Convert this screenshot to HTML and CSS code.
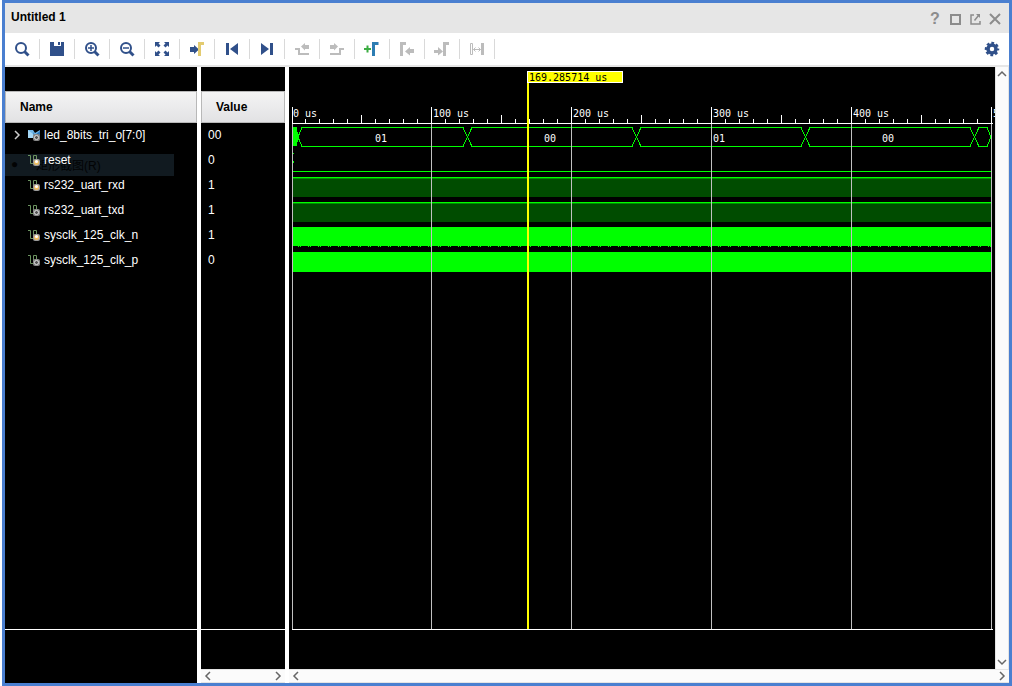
FILE: index.html
```html
<!DOCTYPE html>
<html lang="en">
<head>
<meta charset="utf-8">
<title>Untitled 1</title>
<link rel="stylesheet" href="styles.css">
</head>
<body>
<svg width="0" height="0" class="defs" aria-hidden="true">
  <defs>
    <symbol id="lens" viewBox="0 0 16 16"><circle cx="7" cy="7" r="5" fill="none" stroke="currentColor" stroke-width="2"/><path d="M10.500 10.500l4 4" stroke="currentColor" stroke-width="3"/></symbol>
    <symbol id="chevron" viewBox="0 0 10 10"><path d="M3 1l4 4-4 4" fill="none" stroke="currentColor" stroke-width="1.500"/></symbol>
    <symbol id="wire" viewBox="0 0 12 12"><path d="M0 1.500h2.500v8h3V1.500h3v5" fill="none" stroke="#6c9460"/></symbol>
    <symbol id="input" viewBox="0 0 12 12"><use href="#wire"/><rect x="5" y="5" width="7" height="7" rx="2" fill="#999"/><circle cx="8.500" cy="8.500" r="2.500" fill="#f0c060"/><circle cx="8.500" cy="7.500" r="1.500" fill="#fff"/></symbol>
    <symbol id="output" viewBox="0 0 12 12"><use href="#wire"/><rect x="5" y="5" width="7" height="7" rx="2" fill="#888"/><circle cx="8.500" cy="8.500" r="2" fill="#555" stroke="#ddd"/></symbol>
  </defs>
</svg>
<main class="window">
  <header class="title-bar">
    <h1 class="title">Untitled 1</h1>
    <div class="window-actions">
      <button class="window-button help" aria-label="Help">?</button>
      <button class="window-button" aria-label="Maximize"><svg width="12" height="12"><rect x="2" y="2" width="9" height="9" fill="none" stroke="currentColor" stroke-width="2"/></svg></button>
      <button class="window-button" aria-label="Float"><svg width="12" height="12"><path d="M5 2H2v9h9V8M5.500 7.500l4-5" fill="none" stroke="currentColor" stroke-width="1.500"/><path d="M7 1h4v4z" fill="currentColor"/></svg></button>
      <button class="window-button" aria-label="Close"><svg width="12" height="12"><path d="M1 1l10 10m0-10L1 11" stroke="currentColor" stroke-width="2"/></svg></button>
    </div>
  </header>
  <nav class="toolbar" aria-label="Waveform tools">
    <button class="tool" aria-label="Find"><svg width="16" height="16"><use href="#lens"/></svg></button>
    <button class="tool" aria-label="Save"><svg width="16" height="16"><path d="M1 1h14v14H1z" fill="currentColor"/><path d="M5 1h7v4H5z" fill="#fff"/><path d="M9 1h2v3H9z" fill="currentColor"/></svg></button>
    <button class="tool" aria-label="Zoom in"><svg width="16" height="16"><use href="#lens"/><path d="M4 7h6M7 4v6" stroke="currentColor" stroke-width="1.500"/></svg></button>
    <button class="tool" aria-label="Zoom out"><svg width="16" height="16"><use href="#lens"/><path d="M4 7h6" stroke="currentColor" stroke-width="1.500"/></svg></button>
    <button class="tool" aria-label="Zoom fit"><svg width="16" height="16"><path d="M1 1h5L4.500 2.500 6.500 4.500 4.500 6.500 2.500 4.500 1 6zM15 1v5l-1.500-1.500L11.500 6.500 9.500 4.500l2-2L10 1zM1 15v-5l1.500 1.500L4.500 9.500l2 2-2 2L6 15zM15 15h-5l1.500-1.500L9.500 11.500l2-2 2 2L15 10z" fill="currentColor"/></svg></button>
    <button class="tool" aria-label="Zoom to cursor"><svg width="16" height="16"><path d="M1 6h4V4l5 4.500L5 13v-2H1z" fill="currentColor"/><path d="M10.500 15V2.500H15" fill="none" stroke="#e3cb70" stroke-width="3"/></svg></button>
    <button class="tool" aria-label="Go to start"><svg width="16" height="16"><path d="M2 2h3v12H2zM14 2v12L6 8z" fill="currentColor"/></svg></button>
    <button class="tool" aria-label="Go to end"><svg width="16" height="16"><path d="M11 2h3v12h-3zM2 2v12l8-6z" fill="currentColor"/></svg></button>
    <button class="tool" disabled aria-label="Previous transition"><svg width="16" height="16"><path d="M1 8h4v5h10" fill="none" stroke="currentColor" stroke-width="2"/><path d="M15 4h-4V2L7 5.500l4 4V8h4z" fill="currentColor"/></svg></button>
    <button class="tool" disabled aria-label="Next transition"><svg width="16" height="16"><path d="M15 8h-4v5H1" fill="none" stroke="currentColor" stroke-width="2"/><path d="M1 4h4V2l4 3.500-4 4V8H1z" fill="currentColor"/></svg></button>
    <button class="tool" aria-label="Add marker"><svg width="16" height="16"><path d="M0 8h7M3.500 4.500v7" stroke="#3cad43" stroke-width="2"/><path d="M9.500 15V2.500H14.500" fill="none" stroke="#2d7db3" stroke-width="3"/></svg></button>
    <button class="tool" disabled aria-label="Previous marker"><svg width="16" height="16"><path d="M2.500 15V2.500H7" fill="none" stroke="currentColor" stroke-width="3"/><path d="M15 8h-4V6L6 10.500l5 4V12h4z" fill="currentColor"/></svg></button>
    <button class="tool" disabled aria-label="Next marker"><svg width="16" height="16"><path d="M10.500 15V2.500H15" fill="none" stroke="currentColor" stroke-width="3"/><path d="M0 9h4V6l5 4.500-5 4V12H0z" fill="currentColor"/></svg></button>
    <button class="tool" disabled aria-label="Swap cursors"><svg width="16" height="16"><path d="M1.500 2.500h2v11h-2z" fill="none" stroke="currentColor"/><path d="M12 2h3v12h-3z" fill="currentColor"/><path d="M4.500 8.500h7M6.500 6.500l-2 2 2 2M9.500 6.500l2 2-2 2" fill="none" stroke="currentColor"/></svg></button>
    <button class="tool settings" aria-label="Settings"><svg width="16" height="16"><circle cx="8" cy="8" r="4" fill="none" stroke="currentColor" stroke-width="3.500"/><circle cx="8" cy="8" r="6" fill="none" stroke="currentColor" stroke-width="2.500" stroke-dasharray="2.700 2.012" stroke-dashoffset="1.350"/></svg></button>
  </nav>
  <div class="viewer">
    <section class="pane names">
      <table class="signals">
        <thead><tr><th scope="col">Name</th></tr></thead>
        <tbody>
          <tr><td><div class="signal"><button class="expand" aria-label="Expand"><svg width="10" height="10"><use href="#chevron"/></svg></button><svg width="12" height="12"><path d="M0 1h5l2 3 5-3v8H0z" fill="#6fb6e8"/><path d="M0 1l5 4v4H0z" fill="#a5d7f5"/><path d="M5 3l2 3 5-4v5H6z" fill="#2c77b8"/><rect x="5" y="5" width="7" height="7" rx="2" fill="#888"/><circle cx="8.500" cy="8.500" r="2" fill="#555" stroke="#ddd"/></svg>led_8bits_tri_o[7:0]</div></td></tr>
          <tr><td><div class="ghost"><span class="bullet">●</span><span>矩形截图(R)</span></div><div class="signal"><svg width="12" height="12"><use href="#input"/></svg>reset</div></td></tr>
          <tr><td><div class="signal"><svg width="12" height="12"><use href="#input"/></svg>rs232_uart_rxd</div></td></tr>
          <tr><td><div class="signal"><svg width="12" height="12"><use href="#output"/></svg>rs232_uart_txd</div></td></tr>
          <tr><td><div class="signal"><svg width="12" height="12"><use href="#input"/></svg>sysclk_125_clk_n</div></td></tr>
          <tr><td><div class="signal"><svg width="12" height="12"><use href="#output"/></svg>sysclk_125_clk_p</div></td></tr>
        </tbody>
      </table>
      <div class="pane-foot tall"></div>
    </section>
    <section class="pane values">
      <table class="signals">
        <thead><tr><th scope="col">Value</th></tr></thead>
        <tbody>
          <tr><td>00</td></tr>
          <tr><td>0</td></tr>
          <tr><td>1</td></tr>
          <tr><td>1</td></tr>
          <tr><td>1</td></tr>
          <tr><td>0</td></tr>
        </tbody>
      </table>
      <div class="pane-foot"></div>
      <div class="scroll-x">
        <button class="arrow" aria-label="Scroll left"><svg width="10" height="10" class="left"><use href="#chevron"/></svg></button>
        <button class="arrow" aria-label="Scroll right"><svg width="10" height="10"><use href="#chevron"/></svg></button>
      </div>
    </section>
    <section class="waves">
      <div class="wave-area">
        <svg class="plot" role="img" aria-label="Waveforms" shape-rendering="crispEdges">
          <!-- signal traces -->
          <g fill="#004c00">
            <rect x="4" y="110" width="699" height="20"/>
            <rect x="4" y="135" width="699" height="20"/>
          </g>
          <g fill="#009000">
            <rect x="4" y="111" width="699" height="1"/>
            <rect x="4" y="136" width="699" height="1"/>
          </g>
          <g fill="#00ff00">
            <rect x="4" y="60" width="4" height="19"/>
            <rect x="4" y="86" width="1" height="1"/>
            <rect x="4" y="94" width="1" height="2"/>
            <rect x="4" y="104" width="699" height="1"/>
            <rect x="4" y="110" width="699" height="1"/>
            <rect x="4" y="135" width="699" height="1"/>
            <rect x="4" y="160" width="699" height="19"/>
            <rect x="4" y="185" width="699" height="20"/>
          </g>
          <path d="M9 179.500H703" stroke="#00ff00" stroke-dasharray="1 1 1 7"/>
          <path d="M13 60.500H174L183 79.500H343L352 60.500H512L521 79.500H681L690 60.500H698L702 70M13 79.500H174L183 60.500H343L352 79.500H512L521 60.500H681L690 79.500H698L702 70M13 60.500L9 70L13 79.500M7 60.500L9 70L7 79.500" fill="none" stroke="#00ff00"/>
          <!-- time grid -->
          <path d="M3.500 57V562M142.500 57V562M282.500 57V562M422.500 57V562M562.500 57V562M702.500 57V562" stroke="#c0c0c0"/>
          <path d="M3.500 40V57M142.500 40V57M282.500 40V57M422.500 40V57M562.500 40V57M702.500 40V57M3 56.500H704M3 562.500H704" stroke="#fff"/>
          <path d="M16 54H703" stroke="#fff" stroke-width="4" stroke-dasharray="1 13"/>
          <path d="M72 52H703" stroke="#fff" stroke-width="8" stroke-dasharray="1 139"/>
          <g class="scale">
            <text x="4" y="50">0 us</text>
            <text x="144" y="50">100 us</text>
            <text x="284" y="50">200 us</text>
            <text x="424" y="50">300 us</text>
            <text x="564" y="50">400 us</text>
            <text x="704" y="50">500 us</text>
          </g>
          <g class="scale" text-anchor="middle">
            <text x="92" y="75">01</text>
            <text x="261" y="75">00</text>
            <text x="430" y="75">01</text>
            <text x="599" y="75">00</text>
          </g>
          <!-- cursor -->
          <rect x="238" y="4" width="2" height="558" fill="#ffff00"/>
          <rect x="238.500" y="4.500" width="95" height="11" fill="#ffff00" stroke="#fff"/>
          <text class="cursor-time" x="240" y="14">169.285714 us</text>
        </svg>
        <div class="scroll-y">
          <button class="arrow" aria-label="Scroll up"><svg width="10" height="10" class="up"><use href="#chevron"/></svg></button>
          <button class="arrow" aria-label="Scroll down"><svg width="10" height="10" class="down"><use href="#chevron"/></svg></button>
        </div>
      </div>
      <div class="scroll-x">
        <button class="arrow" aria-label="Scroll left"><svg width="10" height="10" class="left"><use href="#chevron"/></svg></button>
        <button class="arrow" aria-label="Scroll right"><svg width="10" height="10"><use href="#chevron"/></svg></button>
      </div>
    </section>
  </div>
</main>
</body>
</html>
```
FILE: styles.css
```css
* { box-sizing: border-box; }
body {
  margin: 0;
  padding-left: 2px;
  background: #fff;
  font-family: "Liberation Sans", "Noto Sans CJK SC", sans-serif;
  font-size: 12px;
  color: #000;
}
button { border: 0; padding: 0; background: none; font: inherit; color: inherit; }
svg { display: block; flex: none; }
.defs { position: absolute; }
.window {
  display: flex;
  flex-direction: column;
  height: 100vh;
  border: 3px solid #4a7fd0;
}
.title-bar {
  display: flex;
  align-items: center;
  justify-content: space-between;
  height: 30px;
  flex: none;
  padding: 0 8px 0 6px;
  background: #e6e6e6;
}
.title { margin: 0; font-size: 12px; line-height: 16px; padding-bottom: 2px; }
.window-actions { display: flex; gap: 8px; padding-top: 2px; }
.window-button {
  display: flex;
  align-items: center;
  justify-content: center;
  width: 12px;
  height: 16px;
  color: #8c8c8c;
}
.help { font-size: 16px; font-weight: bold; }
.toolbar {
  display: flex;
  align-items: center;
  height: 34px;
  flex: none;
  border-bottom: 2px solid #e6e6e6;
}
.tool {
  display: flex;
  align-items: center;
  justify-content: center;
  width: 35px;
  height: 20px;
  border-right: 1px solid #d9d9d9;
  color: #30508a;
}
.tool:disabled { color: #bcbcbc; }
.settings { margin-left: auto; border: 0; }
.viewer {
  display: flex;
  gap: 4px;
  flex: 1;
  min-height: 0;
}
.pane {
  display: flex;
  flex-direction: column;
  flex: none;
  padding-top: 24px;
  background: #000;
  color: #fff;
}
.names { width: 192px; }
.values { width: 84px; }
.signals { width: 100%; border-collapse: separate; border-spacing: 0; }
.signals th {
  height: 32px;
  padding: 0 14px;
  border: 1px solid #b8b8b8;
  background: linear-gradient(#f4f4f4, #e2e2e4);
  color: #000;
  text-align: left;
}
.signals td { height: 25px; padding: 0 7px 2px; position: relative; }
.signal {
  display: flex;
  align-items: center;
  gap: 4px;
  padding-left: 16px;
  position: relative;
}
.expand {
  position: absolute;
  left: 0;
  color: #ccc;
}
.ghost {
  position: absolute;
  top: 6px;
  left: 0;
  display: flex;
  align-items: center;
  gap: 18px;
  width: 169px;
  height: 22px;
  padding: 0 0 2px 6px;
  background: #111a20;
  color: #020304;
}
.bullet { font-size: 12px; width: 7px; }
.pane-foot {
  height: 40px;
  margin-top: auto;
  border-top: 1px solid #fff;
}
.tall { height: 54px; }
.waves { display: flex; flex-direction: column; flex: 1; min-width: 0; }
.wave-area { display: flex; flex: 1; min-height: 0; background: #000; }
.plot { flex: 1; min-width: 0; height: 100%; }
.scale, .cursor-time { font-family: "DejaVu Sans Mono", monospace; font-size: 10px; fill: #fff; }
.cursor-time { fill: #000; }
.scroll-x, .scroll-y {
  display: flex;
  flex: none;
  justify-content: space-between;
  align-items: center;
  background: #fbfbfb;
  color: #666;
}
.scroll-x { height: 14px; padding: 0 2px; border: solid #e4e4e4; border-width: 1px 0; }
.scroll-y { width: 14px; padding: 2px 0; flex-direction: column; border: solid #e4e4e4; border-width: 0 1px; }
.left { transform: rotate(180deg); }
.up { transform: rotate(-90deg); }
.down { transform: rotate(90deg); }
```
